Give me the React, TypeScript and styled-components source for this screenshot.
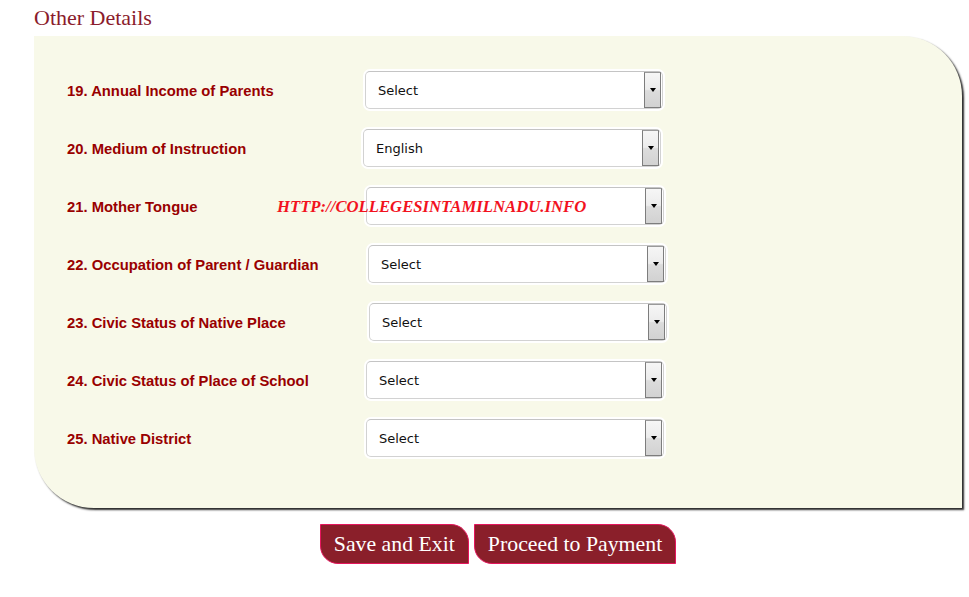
import React from 'react'
import styled, { createGlobalStyle } from 'styled-components'

const GlobalStyle = createGlobalStyle`
  html, body {
    margin: 0;
    padding: 0;
    background: #ffffff;
  }
`

const Page = styled.div`
  padding-left: 34px;
  width: 928px;
`

const Title = styled.div`
  padding-top: 5px;
  margin-bottom: 5px;
  font-family: 'Liberation Serif', 'Times New Roman', serif;
  font-size: 22px;
  line-height: 26px;
  color: #8b1c2c;
`

const Panel = styled.div`
  position: relative;
  box-sizing: border-box;
  width: 928px;
  padding: 35px 0 51px 33px;
  background: #f8f9e9;
  border-top-right-radius: 60px;
  border-bottom-left-radius: 60px;
  box-shadow: 2px 2px 2px #2a2a2a;
  display: flex;
  flex-direction: column;
  gap: 20px;
`

const Row = styled.div`
  display: flex;
  align-items: center;
  height: 38px;
`

const Label = styled.div`
  width: 298px;
  flex-shrink: 0;
  padding-top: 2px;
  font-family: 'Liberation Sans', Arial, sans-serif;
  font-weight: bold;
  font-size: 14.8px;
  color: #990000;
`

const SelectBox = styled.div<{ $shift: number }>`
  margin-left: ${(p) => p.$shift}px;
  box-sizing: border-box;
  width: 298px;
  height: 38px;
  background: #ffffff;
  border: 1px solid #d2d2d2;
  border-top-color: #c4c4c4;
  border-radius: 5px;
  box-shadow: 0 0 0 2px #ffffff;
  display: flex;
  align-items: center;
  justify-content: space-between;
  padding-left: 12px;
  font-family: 'DejaVu Sans', Tahoma, sans-serif;
  font-size: 13px;
  color: #111111;
`

const ArrowButton = styled.div`
  box-sizing: border-box;
  width: 17px;
  height: 36px;
  margin-right: 1px;
  border: 1px solid #7d7d7d;
  border-top-color: #9a9a9a;
  background: linear-gradient(#f6f6f6 0%, #ececec 48%, #dcdcdc 52%, #d2d2d2 100%);
  display: flex;
  align-items: center;
  justify-content: center;

  &::after {
    content: '';
    width: 0;
    height: 0;
    border-left: 3.5px solid transparent;
    border-right: 3.5px solid transparent;
    border-top: 4px solid #000000;
  }
`

const Watermark = styled.div`
  position: absolute;
  left: 243px;
  top: 162px;
  font-family: 'Liberation Serif', 'Times New Roman', serif;
  font-style: italic;
  font-weight: bold;
  font-size: 16.7px;
  line-height: 17px;
  color: #f2121e;
  pointer-events: none;
`

const Buttons = styled.div`
  display: flex;
  justify-content: center;
  gap: 5px;
  margin-top: 16px;
`

const ActionButton = styled.button`
  box-sizing: border-box;
  height: 40px;
  padding: 0 13px;
  background: #8a1f2a;
  border: 1px solid #e5155d;
  border-top-right-radius: 18px;
  border-bottom-left-radius: 18px;
  color: #ffffff;
  font-family: 'Liberation Serif', 'Times New Roman', serif;
  font-size: 21.8px;
  cursor: pointer;
`

const fields = [
  { label: '19. Annual Income of Parents', value: 'Select', shift: 0 },
  { label: '20. Medium of Instruction', value: 'English', shift: -2 },
  { label: '21. Mother Tongue', value: '', shift: 1 },
  { label: '22. Occupation of Parent / Guardian', value: 'Select', shift: 3 },
  { label: '23. Civic Status of Native Place', value: 'Select', shift: 4 },
  { label: '24. Civic Status of Place of School', value: 'Select', shift: 1 },
  { label: '25. Native District', value: 'Select', shift: 1 },
]

const App = () => {
  return (
    <Page>
      <GlobalStyle />
      <Title>Other Details</Title>
      <Panel>
        {fields.map((f) => (
          <Row key={f.label}>
            <Label>{f.label}</Label>
            <SelectBox $shift={f.shift}>
              <span>{f.value}</span>
              <ArrowButton />
            </SelectBox>
          </Row>
        ))}
        <Watermark>HTTP://COLLEGESINTAMILNADU.INFO</Watermark>
      </Panel>
      <Buttons>
        <ActionButton>Save and Exit</ActionButton>
        <ActionButton>Proceed to Payment</ActionButton>
      </Buttons>
    </Page>
  )
}

export default App
